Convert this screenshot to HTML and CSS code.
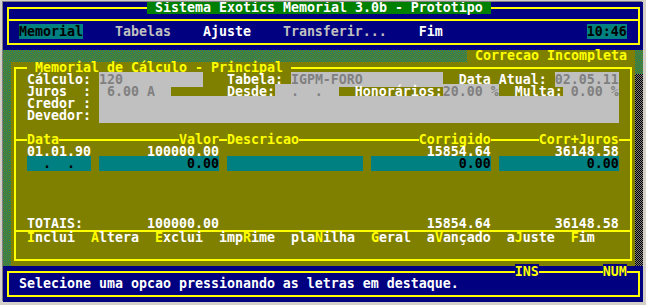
FILE: index.html
```html
<!DOCTYPE html>
<html lang="pt">
<head>
    <meta charset="UTF-8">
    <title>Sistema Exotics Memorial</title>
    <link rel="stylesheet" href="styles.css">
</head>
<body>
    <div class="screen">
        <header class="top">
            <div class="frame menu-frame">
                <div class="line app-title"> Sistema Exotics Memorial 3.0b - Prototipo </div>
                <div class="rule"></div>
                <div class="line menu"><span class="sel">Memorial</span>    <span class="off">Tabelas</span>    Ajuste    <span class="off">Transferir...</span>    Fim                  <span class="sel">10:46</span></div>
            </div>
        </header>

        <main class="desk">
            <div class="line flag-row"><span class="flag"> Correcao Incompleta </span></div>
            <div class="win-row">
                <div class="window">
                    <div class="frame win-frame">
                        <div class="line win-title"> Memorial de Cálculo - Principal </div>

                        <div class="line">Cálculo: <span class="fld">120          </span>   Tabela: <span class="fld">IGPM-FORO          </span>  Data Atual: <span class="fld">02.05.11</span></div>
                        <div class="line">Juros  : <span class="fld"> 6.00 A  </span>       Desde:<span class="fld">  .  .  </span>  Honorários:<span class="fld">20.00 %</span>  Multa:<span class="fld"> 0.00 %</span></div>
                        <div class="line">Credor : <span class="fld">                                                                 </span></div>
                        <div class="line">Devedor: <span class="fld">                                                                 </span></div>

                        <div class="line grid-head"><span>Data</span>               <span>Valor</span> <span>Descricao</span>               <span>Corrigido</span>      <span>Corr+Juros</span></div>
                        <div class="line">01.01.90       100000.00                          15854.64        36148.58</div>
                        <div class="line"><span class="inp">  .  .  </span> <span class="inp">           0.00</span> <span class="inp">                 </span> <span class="inp">           0.00</span> <span class="inp">           0.00</span></div>

                        <div class="line totals">TOTAIS:        100000.00                          15854.64        36148.58</div>
                        <div class="rule"></div>
                        <div class="line actions"><b>I</b>nclui  <b>A</b>ltera  <b>E</b>xclui  imp<b>R</b>ime  pla<b>N</b>ilha  <b>G</b>eral  a<b>V</b>ançado  a<b>J</b>uste  <b>F</b>im</div>
                    </div>
                </div>
                <div class="shadow"></div>
            </div>
        </main>

        <footer class="status">
            <div class="frame status-frame">
                <div class="line status-keys">                                                               <span>INS</span>        <span>NUM</span></div>
                <div class="line status-text">Selecione uma opcao pressionando as letras em destaque.</div>
            </div>
        </footer>
    </div>
</body>
</html>
```

FILE: styles.css
```css
body {
    margin: 0;
    background: #d4d0c8;
    font-family: "DejaVu Sans Mono", monospace;
    font-weight: bold;
    font-size: 13.29px;
    color: #fff;
}

.screen {
    width: 640px;
    height: 300px;
    margin: 2px 3px 3px;
    background: #000080;
    box-shadow: -1px -1px 0 #808080;
    overflow: hidden;
}

.line {
    height: 12px;
    line-height: 12px;
    white-space: pre;
}

.frame {
    box-sizing: border-box;
    border: 2px solid #ffff00;
}

.rule {
    height: 2px;
    background: #ffff00;
}

/* top menu bar */
.top {
    height: 48px;
    padding-top: 5px;
    box-sizing: border-box;
}

.menu-frame {
    margin-left: 4px;
    width: 633px;
    height: 38px;
}

.app-title {
    width: fit-content;
    margin: -7px 0 0 138px;
    background: #008000;
}

.menu-frame .rule {
    margin-top: 5px;
}

.menu {
    margin-top: 5px;
    padding-left: 10px;
}

.menu .off {
    color: #c0c0c0;
}

.menu .sel {
    background: #008080;
    color: #000;
}

/* desktop with the window */
.desk {
    height: 216px;
    background-color: #808000;
    background-image: conic-gradient(#808000 25%, #008080 0 50%, #808000 0 75%, #008080 0);
    background-size: 2px 2px;
}

.flag-row {
    display: flex;
    justify-content: flex-end;
    padding-right: 8px;
}

.flag {
    background: #808000;
    color: #ffff00;
}

.win-row {
    display: flex;
    padding-left: 8px;
}

.window {
    width: 624px;
    height: 204px;
    box-sizing: border-box;
    padding: 5px 3px;
    background: #808000;
}

.win-frame {
    height: 100%;
}

.win-frame .line {
    padding-left: 11px;
}

.win-frame .win-title {
    width: fit-content;
    margin-top: -7px;
    padding: 0;
    margin-left: 11px;
    background: #808000;
    color: #ffff00;
}

.fld {
    background: #c0c0c0;
    color: #808080;
}

.inp {
    background: #008080;
    color: #000;
}

.grid-head {
    margin-top: 12px;
    background: linear-gradient(transparent 5px, #ffff00 5px, #ffff00 7px, transparent 7px);
}

.grid-head span {
    background: #808000;
    color: #ffff00;
}

.totals {
    margin-top: 48px;
}

.actions b {
    color: #ffff00;
    font-weight: bold;
}

.shadow {
    width: 8px;
    margin-top: 12px;
    background-color: #000;
    background-image: conic-gradient(#000 25%, #808080 0 50%, #000 0 75%, #808080 0);
    background-size: 2px 2px;
}

/* status line */
.status {
    height: 36px;
    padding-top: 5px;
    box-sizing: border-box;
}

.status-frame {
    margin-left: 4px;
    width: 633px;
    height: 26px;
}

.status-keys {
    margin-top: -7px;
    padding-left: 2px;
}

.status-keys span {
    background: #000080;
    color: #ffff00;
}

.status-text {
    padding-left: 10px;
}
```
